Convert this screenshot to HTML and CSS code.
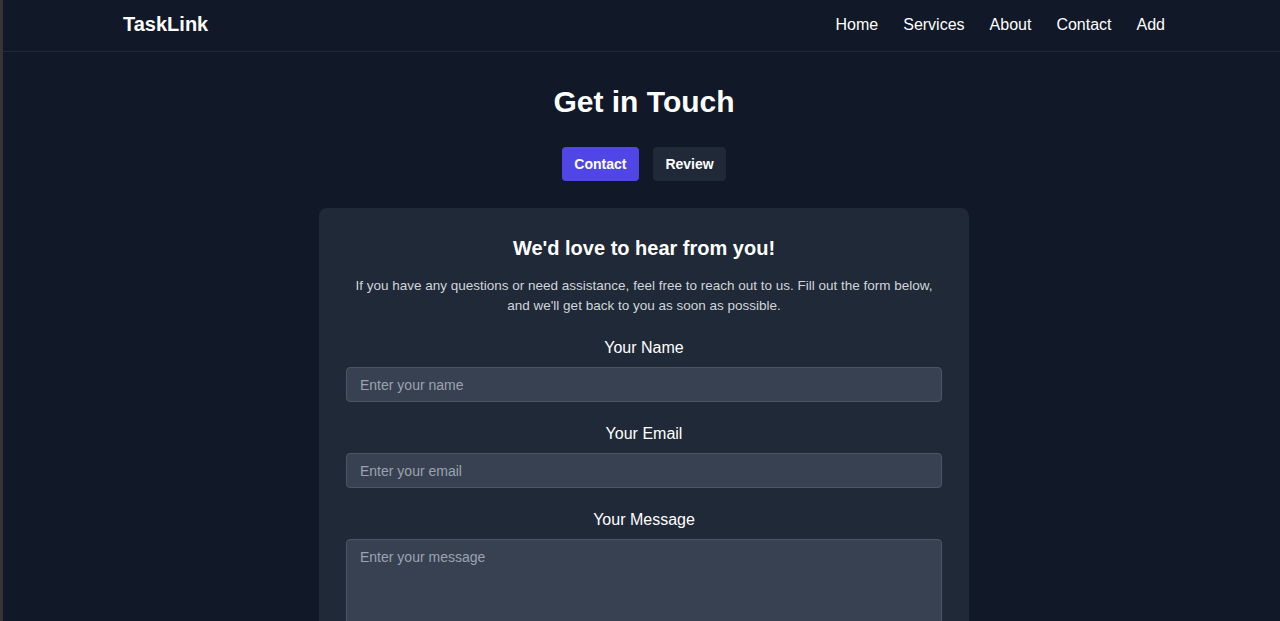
FILE: index.html
```html
<!DOCTYPE html>
<html lang="en">
<head>
<meta charset="utf-8">
<title>TaskLink - Get in Touch</title>
<link rel="stylesheet" href="styles.css">
</head>
<body>
<div class="page">
  <header class="navbar">
    <div class="nav-inner">
      <a class="brand" href="#">TaskLink</a>
      <nav class="nav-links">
        <a href="#">Home</a>
        <a href="#">Services</a>
        <a href="#">About</a>
        <a href="#">Contact</a>
        <a href="#">Add</a>
      </nav>
    </div>
  </header>
  <main class="main">
    <h1 class="title">Get in Touch</h1>
    <div class="tabs">
      <button class="tab tab-active">Contact</button>
      <button class="tab">Review</button>
    </div>
    <section class="card">
      <h2 class="card-title">We'd love to hear from you!</h2>
      <p class="card-text">If you have any questions or need assistance, feel free to reach out to us. Fill out the form below, and we'll get back to you as soon as possible.</p>
      <form class="form">
        <label class="field-label" for="name">Your Name</label>
        <input class="field" id="name" type="text" placeholder="Enter your name">
        <label class="field-label" for="email">Your Email</label>
        <input class="field" id="email" type="email" placeholder="Enter your email">
        <label class="field-label" for="msg">Your Message</label>
        <textarea class="field field-area" id="msg" placeholder="Enter your message"></textarea>
      </form>
    </section>
  </main>
</div>
</body>
</html>
```
FILE: styles.css
```css
* { box-sizing: border-box; }
html, body { margin: 0; padding: 0; }
body {
  background: #111827;
  color: #ffffff;
  font-family: "Liberation Sans", Arial, sans-serif;
  border-left: 3px solid #353535;
  min-height: 621px;
  overflow: hidden;
}
.page {
  padding-left: 5px;
}
.navbar {
  border-bottom: 1px solid #1f2937;
  margin-left: -5px;
  padding-left: 5px;
}
.nav-inner {
  width: 1042px;
  margin: 0 auto;
  height: 51px;
  padding-bottom: 2px;
  display: flex;
  align-items: center;
  justify-content: space-between;
}
.brand {
  color: #ffffff;
  text-decoration: none;
  font-weight: 700;
  font-size: 20px;
}
.nav-links {
  display: flex;
  gap: 25px;
}
.nav-links a {
  color: #ffffff;
  text-decoration: none;
  font-size: 16px;
}
.main {
  display: flex;
  flex-direction: column;
  align-items: center;
  padding-top: 32px;
}
.title {
  margin: 0;
  font-size: 30px;
  line-height: 36px;
  font-weight: 700;
}
.tabs {
  display: flex;
  gap: 14px;
  margin-top: 27px;
}
.tab {
  font-family: inherit;
  font-size: 14px;
  line-height: 18px;
  font-weight: 700;
  color: #ffffff;
  background: #1f2937;
  border: none;
  border-radius: 4px;
  padding: 8px 12.5px;
  height: 34px;
}
.tab-active {
  background: #4f46e5;
}
.card {
  margin-top: 27px;
  width: 650px;
  background: #1f2937;
  border-radius: 8px;
  padding: 26px 27px 40px;
  text-align: center;
}
.card-title {
  margin: 0;
  font-size: 20px;
  line-height: 28px;
  font-weight: 700;
}
.card-text {
  margin: 14px 0 0;
  font-size: 13.5px;
  line-height: 20px;
  color: #d1d5db;
}
.form {
  display: flex;
  flex-direction: column;
  margin-top: 20px;
}
.field-label {
  font-size: 16px;
  line-height: 24px;
  margin-bottom: 7px;
}
.field {
  font-family: inherit;
  font-size: 14px;
  color: #ffffff;
  background: #374151;
  border: 1px solid #4b5563;
  border-radius: 4px;
  height: 35px;
  padding: 0 13px;
  margin-bottom: 20px;
}
.field::placeholder {
  color: #9ca3af;
}
.field-area {
  height: 120px;
  padding: 9px 13px;
  resize: vertical;
}
```
